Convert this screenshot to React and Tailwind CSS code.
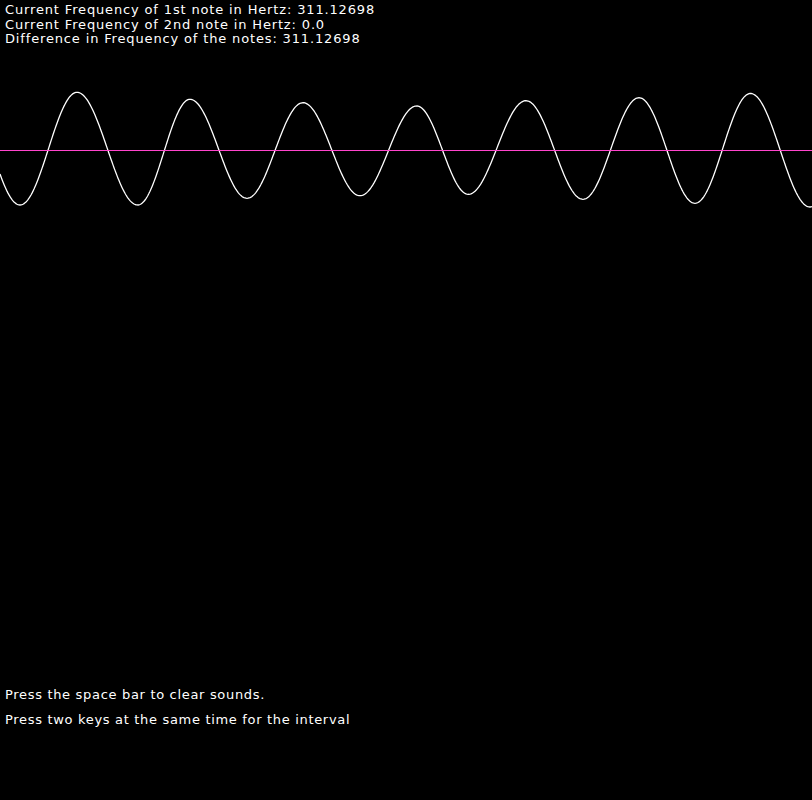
import React from 'react';

// peaks and troughs of the wave, read off the screen
const extrema = [
  [-37, 92], [20, 205], [77, 92.3], [137.7, 205], [190, 99.3], [247, 198.3],
  [303, 102.7], [360, 195.7], [416.7, 106], [468.3, 194.3], [526, 100.7],
  [583, 199.3], [639, 97.7], [695, 203.3], [750.5, 93.5], [810, 207], [866, 92]
];

const buildPath = () => {
  const pts = [];
  for (let x = 0; x <= 812; x += 1) {
    let i = 0;
    while (i < extrema.length - 2 && extrema[i + 1][0] < x) i++;
    const [x0, y0] = extrema[i];
    const [x1, y1] = extrema[i + 1];
    const t = (x - x0) / (x1 - x0);
    const y = y0 + (y1 - y0) * (1 - Math.cos(Math.PI * t)) / 2;
    pts.push(`${x},${y.toFixed(2)}`);
  }
  return 'M' + pts.join(' L');
};

const wavePath = buildPath();

const App = () => {
  return (
    <div className="w-[812px] h-[800px] bg-black text-white flex flex-col font-['DejaVu_Sans',sans-serif] text-[13px]">
      <div className="h-[80px] pt-[3px] pl-[5px] leading-[14.7px] tracking-[0.85px]">
        <p>Current Frequency of 1st note in Hertz: 311.12698</p>
        <p>Current Frequency of 2nd note in Hertz: 0.0</p>
        <p>Difference in Frequency of the notes: 311.12698</p>
      </div>

      <svg width="812" height="140" viewBox="0 80 812 140" className="block">
        <path d={wavePath} fill="none" stroke="#ffffff" strokeWidth="1.3" />
        <line x1="0" y1="150.5" x2="812" y2="150.5" stroke="#ff44cc" strokeWidth="1" />
      </svg>

      <div className="mt-auto pl-[5px] pb-[68px] leading-[25px] tracking-[0.68px]">
        <p>Press the space bar to clear sounds.</p>
        <p>Press two keys at the same time for the interval</p>
      </div>
    </div>
  );
};

export default App;
